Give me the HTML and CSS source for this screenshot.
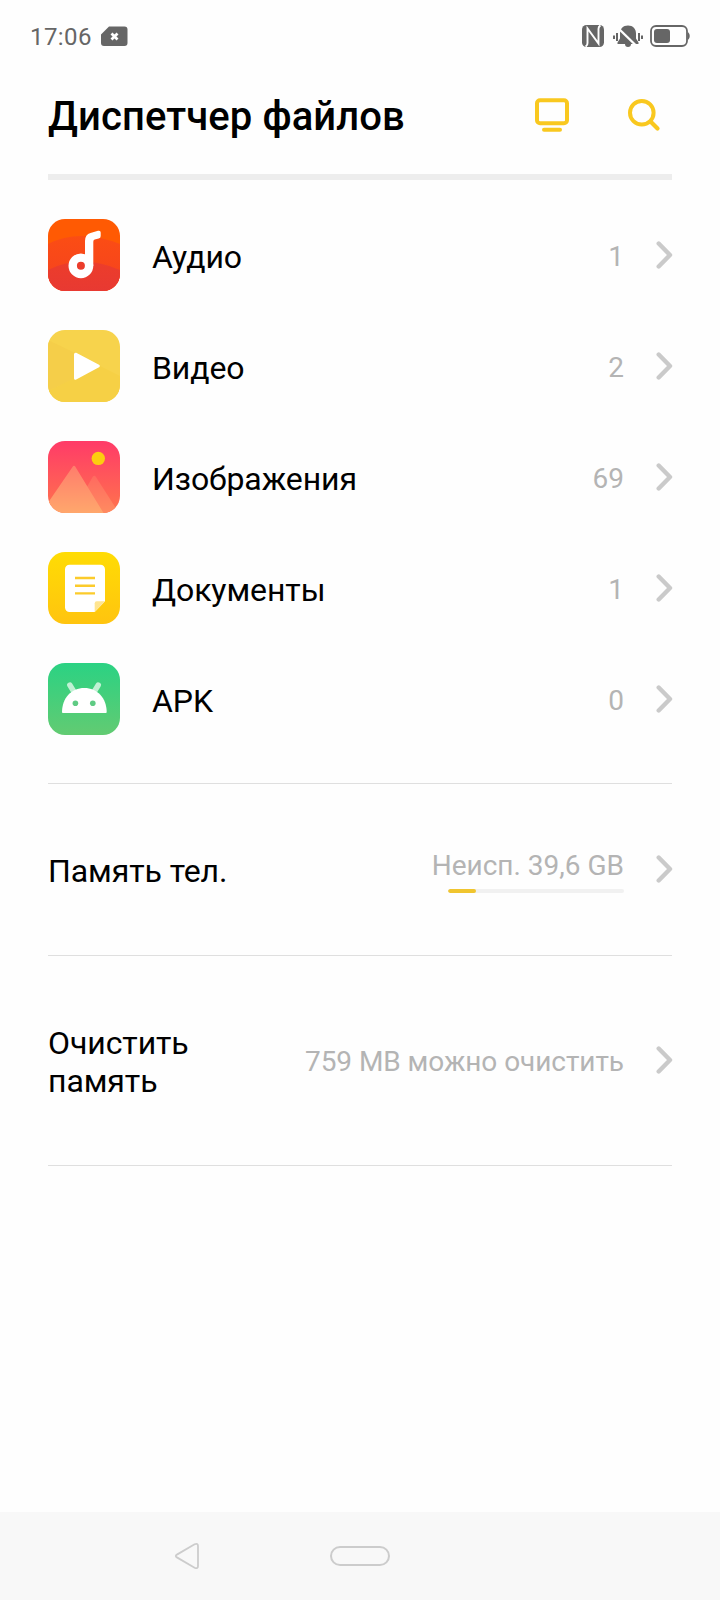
FILE: index.html
```html
<!DOCTYPE html>
<html lang="ru">
<head>
<meta charset="utf-8">
<title>Диспетчер файлов</title>
<link rel="stylesheet" href="styles.css">
</head>
<body>
<div class="status">
  <div class="status-left">
    <span class="time">17:06</span>
    <svg width="27" height="21" viewBox="0 0 27 21"><path d="M8 0.500H23.500a3 3 0 0 1 3 3V17a3 3 0 0 1-3 3H3a3 3 0 0 1-3-3V8.500z" fill="#666"/><path d="M10.500 7.500l6 6M16.500 7.500l-6 6" stroke="#fff" stroke-width="2.800"/></svg>
  </div>
  <div class="status-right">
    <svg width="22" height="22" viewBox="0 0 22 22"><rect width="22" height="22" rx="4.500" fill="#666"/><path d="M3.500 21.500q2-.8 2-3.500V3.500L16.500 18.500V4q0-2.700 2-3.500" fill="none" stroke="#fefefe" stroke-width="1.900"/></svg>
    <svg width="30" height="23" viewBox="0 0 30 23"><path d="M15 0.500c5 0 8 3.500 8 8v5l2.500 4v1.500H18a3 3 0 0 1-6 0H4.500v-1.500L7 13.500v-5c0-4.500 3-8 8-8z" fill="#666"/><path d="M4.500 2.500L24 21.500" stroke="#fefefe" stroke-width="2.400"/><path d="M4 8v8M26 8v8" stroke="#666" stroke-width="2"/><path d="M1 10.500v3.500M29 10.500v3.500" stroke="#666" stroke-width="2"/></svg>
    <svg width="40" height="22" viewBox="0 0 40 22"><rect x="1" y="1" width="36" height="20" rx="5" fill="none" stroke="#666" stroke-width="1.800"/><rect x="4" y="4" width="16" height="14" rx="3" fill="#666"/><path d="M37.500 7.500h1q2.500 3.500 0 7h-1z" fill="#666"/></svg>
  </div>
</div>

<header class="header">
  <h1 class="title">Диспетчер файлов</h1>
  <div class="actions">
    <svg width="34" height="34" viewBox="0 0 34 34" fill="none" stroke="#f9c81f" stroke-width="4"><rect x="2" y="2.300" width="30" height="23" rx="3"/><path d="M9 31.700H25" stroke-linecap="round"/></svg>
    <svg width="34" height="34" viewBox="0 0 34 34" fill="none" stroke="#f9c81f" stroke-width="4"><circle cx="13.800" cy="14.700" r="11.800"/><path d="M22.500 23.500l7 7" stroke-width="4.200" stroke-linecap="round"/></svg>
  </div>
</header>

<main class="content">
  <ul class="categories">
    <li class="category">
      <svg class="tile" viewBox="0 0 72 72">
        <defs>
          <linearGradient id="hill" x2="0" y2="1"><stop stop-color="#fb4d14"/><stop offset="1" stop-color="#f54120"/></linearGradient>
          <linearGradient id="hill2" x2="0" y2="1"><stop stop-color="#ec3d2b"/><stop offset="1" stop-color="#e83932"/></linearGradient>
        </defs>
        <rect width="72" height="72" fill="#ff5a03"/><path d="M0 25Q31 9 72 25V72H0z" fill="url(#hill)"/><path d="M0 51Q33 34 72 51V72H0z" fill="url(#hill2)"/><path d="M37 47V22q0-6.500 5.500-8l7.500-2.200q2.700-.6 2.700 1.600v3.600q0 2.100-2 2.600l-4 1q-1.400.4-1.400 2.200V47" fill="#fff"/><circle cx="32.900" cy="46.800" r="8.200" fill="none" stroke="#fff" stroke-width="8.400"/></svg>
      <span class="label">Аудио</span><span class="value">1</span>
      <svg class="chevron" viewBox="0 0 17 28"><path d="M2.700 2.500L14 14L2.700 25.500"/></svg>
    </li>
    <li class="category">
      <svg class="tile" viewBox="0 0 72 72"><rect width="72" height="72" fill="#f7d34c"/><path d="M27 48L52 36L72 46V72H0V61z" fill="#f6d045"/><path d="M0 10L27 23L27 48L0 61z" fill="#f5ce49"/><path d="M27.500 24.200L50.300 36L27.500 48.200z" fill="#fff" stroke="#fff" stroke-width="3" stroke-linejoin="round"/></svg>
      <span class="label">Видео</span><span class="value">2</span>
      <svg class="chevron" viewBox="0 0 17 28"><path d="M2.700 2.500L14 14L2.700 25.500"/></svg>
    </li>
    <li class="category">
      <svg class="tile" viewBox="0 0 72 72">
        <defs>
          <linearGradient id="sky" x2="0" y2="1"><stop stop-color="#ff3b68"/><stop offset="1" stop-color="#ff744c"/></linearGradient>
          <linearGradient id="peak" x2="0" y2="1"><stop stop-color="#ff7d6c"/><stop offset="1" stop-color="#ffa76c"/></linearGradient>
          <linearGradient id="peak2" x2="0" y2="1"><stop stop-color="#ff6a60"/><stop offset="1" stop-color="#ff8b60"/></linearGradient>
        </defs>
        <rect width="72" height="72" fill="url(#sky)"/><path d="M24 72L44.800 35.800q1.500-2 3 0L71 72z" fill="url(#peak2)"/><path d="M-3 72V66L24.500 26q1.500-2.500 3 0L55.500 72z" fill="url(#peak)"/><circle cx="50.300" cy="17.400" r="6.700" fill="#fdcd0f"/></svg>
      <span class="label">Изображения</span><span class="value">69</span>
      <svg class="chevron" viewBox="0 0 17 28"><path d="M2.700 2.500L14 14L2.700 25.500"/></svg>
    </li>
    <li class="category">
      <svg class="tile" viewBox="0 0 72 72">
        <defs><linearGradient id="doc" x2="0" y2="1"><stop stop-color="#ffdc04"/><stop offset="1" stop-color="#ffc40f"/></linearGradient></defs>
        <rect width="72" height="72" fill="url(#doc)"/><path d="M21.500 12.700H52.500a4.500 4.500 0 0 1 4.500 4.500V49.300L46.700 60H21.500a4.500 4.500 0 0 1-4.500-4.500V17.200a4.500 4.500 0 0 1 4.500-4.500z" fill="#fff"/><path d="M46.700 60V51.300q0-2 2-2H57z" fill="#ffe591"/><path d="M27 26H47M27 33.700H47M27 41.400H47" stroke="#fccb2b" stroke-width="2.400"/></svg>
      <span class="label">Документы</span><span class="value">1</span>
      <svg class="chevron" viewBox="0 0 17 28"><path d="M2.700 2.500L14 14L2.700 25.500"/></svg>
    </li>
    <li class="category">
      <svg class="tile" viewBox="0 0 72 72">
        <defs><linearGradient id="apk" x2="0" y2="1"><stop stop-color="#2bd283"/><stop offset="1" stop-color="#62cb72"/></linearGradient></defs>
        <rect width="72" height="72" fill="url(#apk)"/><path d="M21.800 22l5.500 9M50.300 22l-5.500 9" stroke="#c0f1d4" stroke-width="5.400" stroke-linecap="round"/><path d="M14 49.300C14 35 23.500 25 36.300 25S58.700 35 58.700 49.300q0 .8-1 .8H15q-1 0-1-.8z" fill="#fff"/><circle cx="27.400" cy="40.300" r="2.800" fill="#5fcb84"/><circle cx="44.800" cy="40.300" r="2.800" fill="#5fcb84"/></svg>
      <span class="label">APK</span><span class="value">0</span>
      <svg class="chevron" viewBox="0 0 17 28"><path d="M2.700 2.500L14 14L2.700 25.500"/></svg>
    </li>
  </ul>

  <section class="row storage">
    <span class="label">Память тел.</span>
    <div class="usage">
      <span class="usage-text">Неисп. 39,6 GB</span>
      <div class="meter"><div class="meter-fill" style="width:16%"></div></div>
    </div>
    <svg class="chevron" viewBox="0 0 17 28"><path d="M2.700 2.500L14 14L2.700 25.500"/></svg>
  </section>

  <section class="row cleanup">
    <span class="label">Очистить<br>память</span>
    <span class="value">759 MB можно очистить</span>
    <svg class="chevron" viewBox="0 0 17 28"><path d="M2.700 2.500L14 14L2.700 25.500"/></svg>
  </section>
</main>

<nav class="navbar">
  <svg width="26" height="28" viewBox="0 0 26 28"><path d="M2.900 12.600L20.600 2.300Q24 .8 24 4V24Q24 27.200 20.600 25.700L2.900 15.400Q.7 14 2.900 12.600z" fill="none" stroke="#ccc" stroke-width="1.800"/></svg>
  <div class="home"></div>
</nav>
</body>
</html>
```

FILE: styles.css
```css
* { box-sizing: border-box; }

body {
  margin: 0;
  width: 720px;
  height: 1600px;
  display: flex;
  flex-direction: column;
  background: #fefefe;
  color: #000;
  font-family: Roboto, sans-serif;
}

svg { display: block; flex: none; }

.status {
  height: 72px;
  padding: 0 30px;
  display: flex;
  justify-content: space-between;
  color: #666;
}
.status-left { display: flex; align-items: center; gap: 9px; }
.status-right { display: flex; align-items: center; gap: 9px; }
.status-right svg:nth-child(2) { margin-right: -2px; }
.time { font-size: 24px; line-height: 28px; padding-top: 2px; letter-spacing: 0.4px; }

.header {
  height: 108px;
  margin: 0 48px;
  border-bottom: 6px solid #ededed;
  display: flex;
  justify-content: space-between;
}
.title {
  margin: 21px 0 0;
  font-size: 40px;
  line-height: 48px;
  font-weight: 500;
  letter-spacing: 0.1px;
}
.actions { display: flex; gap: 59px; padding: 26px 10px 0 0; }

.content { flex: 1; padding: 0 48px; }

.categories {
  list-style: none;
  margin: 0;
  padding: 39px 0 48px;
  display: flex;
  flex-direction: column;
  gap: 39px;
  border-bottom: 1px solid #dfdfdf;
}
.category { height: 72px; display: flex; align-items: center; }
.tile { width: 72px; height: 72px; border-radius: 17px; margin-right: 32px; }
.label { font-size: 32px; line-height: 38px; padding-top: 4px; letter-spacing: -0.08px; }
.value {
  margin-left: auto;
  padding-top: 3px;
  font-size: 28px;
  line-height: 34px;
  color: #b4b4b4;
}
.chevron {
  width: 17px;
  height: 28px;
  margin: 0 -1px 0 32px;
  fill: none;
  stroke: #cacaca;
  stroke-width: 4.4;
  stroke-linecap: round;
  stroke-linejoin: round;
}

.row { display: flex; align-items: center; border-bottom: 1px solid #dfdfdf; }
.row .chevron { margin-bottom: 2px; }
.row .label { padding-top: 2px; }
.storage { height: 172px; }
.cleanup { height: 210px; }
.cleanup .value { letter-spacing: -0.06px; }

.usage {
  margin-left: auto;
  padding-top: 3px;
  display: flex;
  flex-direction: column;
  align-items: flex-end;
  gap: 6px;
}
.usage-text { font-size: 28px; line-height: 34px; color: #b4b4b4; }
.meter {
  width: 176px;
  height: 4px;
  border-radius: 2px;
  background: #f1f1f1;
  overflow: hidden;
}
.meter-fill { height: 4px; border-radius: 2px; background: #f0c52f; }

.navbar {
  height: 88px;
  padding-left: 174px;
  display: flex;
  align-items: center;
  gap: 130px;
  background: #f8f8f8;
}
.home { width: 60px; height: 20px; border: 2px solid #ccc; border-radius: 10px; }
```
